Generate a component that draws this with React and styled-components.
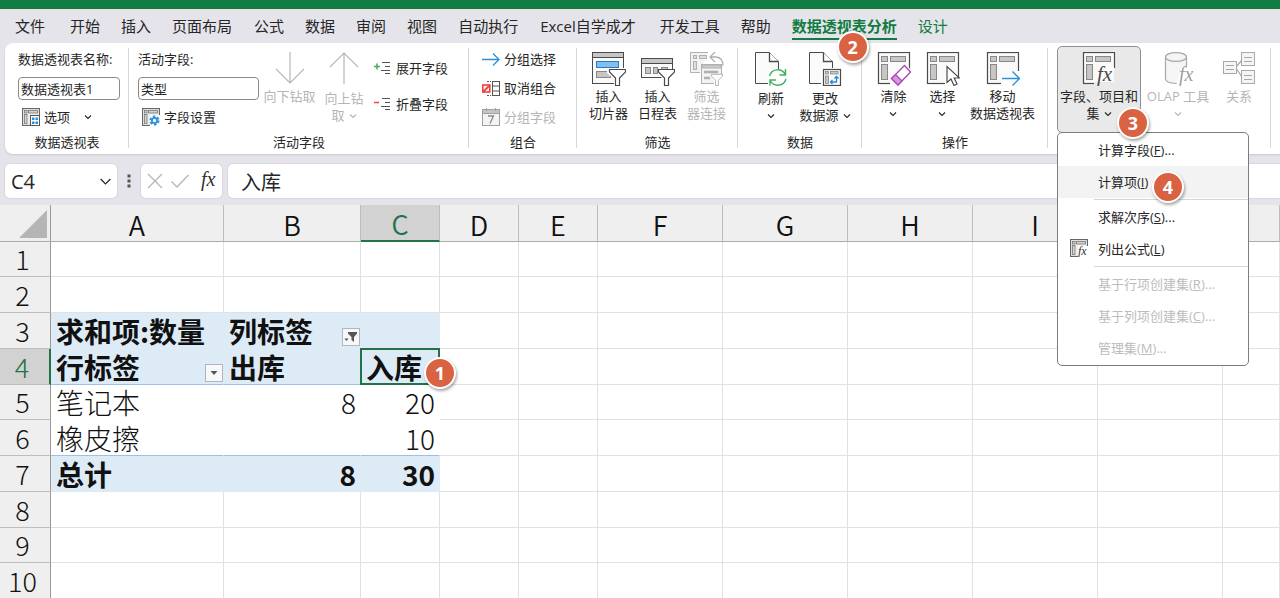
import React from "react";
import styled, { createGlobalStyle, css } from "styled-components";

const GREEN = "#107c41";

const GlobalStyle = createGlobalStyle`
  *, *::before, *::after { box-sizing: border-box; }
  body {
    margin: 0;
    background: #e5e4ea;
    color: #262626;
    font-family: "Open Sans", "Noto Sans CJK SC", sans-serif;
    font-size: 13px;
    overflow-x: hidden;
  }
  button, input {
    font: inherit;
    color: inherit;
    margin: 0;
    padding: 0;
    border: 0;
    background: none;
  }
  svg { display: block; flex: none; }
`;

/* ---------- window frame and tabs ---------- */

const TitleBar = styled.header`
  height: 9px;
  background: ${GREEN};
`;

const TabBar = styled.nav`
  display: flex;
  gap: 1px;
  height: 34px;
  padding-left: 5px;
  font-size: 15px;
`;

const Tab = styled.button`
  position: relative;
  flex: none;
  height: 34px;
  padding: 0 ${(p) => p.$padRight || 10}px 0 10px;
  line-height: 34px;
  white-space: nowrap;
  color: ${(p) => (p.$green ? GREEN : "#262626")};
  font-weight: ${(p) => (p.$active ? 700 : 400)};
  &:first-child { margin-right: 4px; }
  ${(p) =>
    p.$active &&
    css`
      &::after {
        content: "";
        position: absolute;
        left: 10px;
        right: 10px;
        bottom: 3px;
        height: 2px;
        background: ${GREEN};
      }
    `}
`;

const Badge = styled.span`
  position: absolute;
  z-index: 5;
  left: ${(p) => p.$left}px;
  top: ${(p) => p.$top}px;
  width: 32px;
  height: 32px;
  border: 2px solid #fff;
  border-radius: 50%;
  background: #d96243;
  box-shadow: 1px 2px 3px rgba(0, 0, 0, 0.35);
  color: #fff;
  font: 700 18px/28px "Open Sans", sans-serif;
  text-align: center;
`;

/* ---------- ribbon ---------- */

const Ribbon = styled.section`
  display: flex;
  margin-left: 5px;
  background: #fff;
  border-radius: 8px 0 0 8px;
  box-shadow: 0 1px 2px rgba(0, 0, 0, 0.12);
`;

const Group = styled.div`
  position: relative;
  display: flex;
  flex-direction: column;
  flex: none;
  width: ${(p) => p.$width}px;
  height: 111px;
  &::after {
    content: "";
    position: absolute;
    right: 0;
    top: 5px;
    bottom: 6px;
    width: 1px;
    background: #d6d6d6;
  }
`;

const GroupBody = styled.div`
  display: flex;
  justify-content: ${(p) => p.$justify || "center"};
  height: 88px;
  padding: ${(p) => p.$pad || "0"};
`;

const GroupLabel = styled.div`
  line-height: 22px;
  text-align: center;
`;

const FieldColumn = styled.div`
  display: flex;
  flex-direction: column;
  align-items: flex-start;
  gap: 8px;
  width: ${(p) => p.$width}px;
  padding-top: 7px;
`;

const FieldLabel = styled.label`
  line-height: 19px;
  white-space: nowrap;
`;

const TextBox = styled.input`
  width: 100%;
  height: 23px;
  padding: 0 2px;
  border: 1px solid #8a8a8a;
  border-radius: 4px;
  background: #fff;
`;

const SmallColumn = styled.div`
  display: flex;
  flex-direction: column;
  gap: ${(p) => p.$gap}px;
  padding: ${(p) => p.$pad};
`;

const SmallButton = styled.button`
  display: flex;
  align-items: center;
  gap: 4px;
  height: 18px;
  padding-left: ${(p) => (p.$indent ? 4 : 0)}px;
  line-height: 18px;
  white-space: nowrap;
  color: ${(p) => (p.disabled ? "#b5b5b5" : "#262626")};
`;

const Trailing = styled.span`
  margin-left: 10px;
`;

const LargeButton = styled.button`
  display: flex;
  flex-direction: column;
  align-items: center;
  flex: none;
  width: ${(p) => p.$width}px;
  padding-top: 9px;
  line-height: 17px;
  white-space: nowrap;
  color: ${(p) => (p.disabled ? "#b5b5b5" : "#262626")};
`;

const LargeLabel = styled.span`
  display: flex;
  flex-direction: column;
  align-items: center;
  margin-top: ${(p) => (p.$low ? 4 : 2)}px;
`;

const Line = styled.span`
  display: flex;
  align-items: center;
  justify-content: center;
  gap: 4px;
  height: 17px;
`;

const MenuAnchor = styled.div`
  position: relative;
  width: 84px;
  padding-top: 3px;
`;

const OpenButton = styled(LargeButton)`
  width: 100%;
  height: 87px;
  padding-top: 5px;
  border: 1px solid #8f8f8f;
  border-radius: 5px;
  background: #e9e9e9;
`;

const Menu = styled.div`
  position: absolute;
  z-index: 4;
  left: 0;
  top: 89px;
  width: 192px;
  padding: 1px 0;
  border: 1px solid #7d7d7d;
  border-radius: 5px;
  background: #fff;
`;

const MenuItem = styled.button`
  position: relative;
  display: grid;
  grid-template-columns: 40px 1fr;
  align-items: center;
  width: 100%;
  height: 32px;
  padding-bottom: 2px;
  text-align: left;
  white-space: nowrap;
  color: ${(p) => (p.disabled ? "#bcbcbc" : "#262626")};
  background: ${(p) => (p.$hover ? "#f3f3f3" : "transparent")};
`;

const MenuIcon = styled.span`
  padding-left: 12px;
`;

const MenuRule = styled.div`
  height: 3px;
  padding: 1px 0 1px 36px;
  &::before {
    content: "";
    display: block;
    height: 1px;
    background: #d6d6d6;
  }
`;

/* ---------- formula bar ---------- */

const FormulaBar = styled.section`
  display: flex;
  align-items: center;
  height: 51px;
  padding: 3px 0 0 5px;
  font-size: 20px;
`;

const BarBox = styled.div`
  display: flex;
  align-items: center;
  justify-content: space-between;
  height: 34px;
  border-radius: 5px;
  background: #fff;
  box-shadow: 0 0 1px 1px rgba(0, 0, 0, 0.06);
`;

const NameBox = styled(BarBox)`
  width: 112px;
  padding: 0 5px 0 6px;
  input { width: 70px; }
`;

const EditBox = styled(BarBox)`
  width: 81px;
  margin-right: 6px;
  padding: 0 2px 0 6px;
`;

const FormulaBox = styled(BarBox)`
  flex: 1;
  border-radius: 5px 0 0 5px;
  input { width: 100%; padding-left: 13px; }
`;

const Dots = styled.span`
  display: flex;
  justify-content: center;
  width: 24px;
`;

/* ---------- worksheet ---------- */

const Sheet = styled.table`
  width: 100%;
  table-layout: fixed;
  border-collapse: separate;
  border-spacing: 0;
  background: #fff;
  color: #111;
  font-family: "Noto Sans CJK SC", sans-serif;
  font-size: 28px;
  line-height: 34px;
`;

const Col = styled.col`
  width: ${(p) => (p.$width ? p.$width + "px" : "auto")};
`;

const ColHead = styled.th`
  height: 37px;
  padding: 4px 0 0;
  font-size: 27px;
  line-height: 32px;
  font-weight: 350;
  border-right: 1px solid #bdbdbd;
  border-bottom: 1px solid #ababab;
  background: #efefef;
  ${(p) =>
    p.$selected &&
    css`
      padding-top: 3px;
      background: #d2d2d2;
      color: #217346;
      border-bottom: 2px solid #217346;
    `}
`;

const Corner = styled(ColHead)`
  padding: 1px 3px 0 0;
  border-right-color: #999;
  svg { margin-left: auto; }
`;

const Row = styled.tr`
  height: 36px;
  &:nth-child(4n + 1) { height: 35px; }
`;

const RowHead = styled.th`
  padding: 0 5px 0 0;
  font-size: 27px;
  font-weight: 300;
  border-right: 1px solid #999;
  border-bottom: 1px solid #bdbdbd;
  background: #efefef;
  ${(p) =>
    p.$selected &&
    css`
      background: #d2d2d2;
      color: #217346;
      border-right: 2px solid #217346;
    `}
`;

const Cell = styled.td`
  position: relative;
  padding: 0;
  border-right: 1px solid ${(p) => (p.$fill ? p.$fill : "#e1e1e1")};
  border-bottom: 1px solid ${(p) => p.$rule || p.$fill || "#e1e1e1"};
  background: ${(p) => p.$fill || "#fff"};
  font-weight: ${(p) => (p.$bold ? 700 : 300)};
  ${(p) =>
    p.$selected &&
    css`
      &::after {
        content: "";
        position: absolute;
        inset: -1px;
        border: 2px solid #217346;
      }
    `}
`;

const CellContent = styled.div`
  display: flex;
  align-items: center;
  justify-content: ${(p) => (p.$right ? "flex-end" : "space-between")};
  height: 34px;
  padding: 0 ${(p) => (p.$right ? 4 : 0)}px 0 5px;
  line-height: 32px;
  white-space: nowrap;
`;

const FilterButton = styled.button`
  display: flex;
  align-items: center;
  justify-content: center;
  align-self: flex-end;
  width: 18px;
  height: 18px;
  margin-bottom: 2px;
  border: 1px solid #b4b4bc;
  background: #f7f8fa;
`;

/* ---------- icons ---------- */

const INK = "#4a4a4a";

const Chevron = ({ size = 8, color = "currentColor" }) => (
  <svg width={size} height={size} viewBox="0 0 8 8" fill="none" stroke={color} strokeWidth={size > 9 ? 0.8 : 1.1}>
    <path d="M1 2.5 4 5.5 7 2.5" />
  </svg>
);

const Svg = ({ size = 34, box = 34, children }) => (
  <svg width={size} height={size} viewBox={`0 0 ${box} ${box}`} fill="none" aria-hidden="true">
    {children}
  </svg>
);

const PivotGrid = ({ ink = INK, fill = "#c8c6c4" }) => (
  <g stroke={ink}>
    <rect x="1.5" y="0.5" width="31" height="31" fill="#fafafa" strokeWidth="1.2" />
    <g fill={fill} stroke="#8a8886">
      <rect x="4.5" y="4.5" width="6" height="5" />
      <rect x="13.5" y="4.5" width="15" height="5" />
      <rect x="4.5" y="12.5" width="6" height="15" />
    </g>
  </g>
);

const Funnel = ({ x, y, ink = INK, scale = 1 }) => (
  <path
    transform={`translate(${x} ${y}) scale(${scale})`}
    d="M0.5 0.5H16.5V3L10.5 9V16.5H6.5V9L0.5 3Z"
    fill="#fff"
    stroke={ink}
    strokeWidth="1.2"
  />
);

const SlicerIcon = () => (
  <Svg>
    <rect x="0.5" y="0.5" width="31" height="31" fill="#fafafa" stroke={INK} />
    <path d="M1 1H31V5H1Z" fill="#c8c6c4" />
    <path d="M0.5 5.5H31.5" stroke={INK} />
    <rect x="4.5" y="9.5" width="22" height="6" fill="#83beec" stroke="#1e7fd0" />
    <rect x="4.5" y="19.5" width="14" height="6" fill="#c8c6c4" stroke="#8a8886" />
    <path d="M15 16H34V34H22V27L15 21Z" fill="#fff" />
    <Funnel x={17} y={17} />
  </Svg>
);

const TimelineIcon = () => (
  <Svg>
    <rect x="0.5" y="6.5" width="31" height="19" fill="#fafafa" stroke={INK} />
    <path d="M1 7H31V11H1Z" fill="#c8c6c4" />
    <path d="M0.5 11.5H31.5" stroke={INK} />
    <g fill="#c8c6c4" stroke="#8a8886">
      <rect x="4.5" y="15.5" width="5" height="6" />
      <rect x="12.5" y="15.5" width="4" height="6" />
      <rect x="20.5" y="15.5" width="6" height="6" />
    </g>
    <path d="M19 18H34V34H22V27L17 22Z" fill="#fff" />
    <Funnel x={17} y={17} />
  </Svg>
);

const FilterLinkIcon = () => (
  <Svg>
    <g stroke="#b0b0b0">
      <path d="M18 0.5H0.5V20.5H10" fill="#f3f3f3" />
      <rect x="3.5" y="3.5" width="3" height="3" fill="#ddd" />
      <rect x="9.5" y="3.5" width="7" height="3" fill="#ddd" />
      <rect x="3.5" y="9.5" width="3" height="8" fill="#ddd" />
      <path d="M25 0 20 5 25 10M20 5H26Q33 5.5 33 14" strokeWidth="1.3" />
      <rect x="11.5" y="12.5" width="20" height="19" fill="#f3f3f3" />
      <path d="M12 13H31V16H12Z" fill="#ccc" />
      <path d="M14 20H28M14 26H20" strokeWidth="2.4" />
    </g>
    <path d="M20 22H34V34H24V29Z" fill="#fff" />
    <Funnel x={21} y={22} ink="#a8a8a8" scale={0.7} />
  </Svg>
);

const Page = () => (
  <>
    <path d="M1.5 0.5H15.5L24.5 9.5V31.5H1.5Z" fill="#fafafa" stroke={INK} />
    <path d="M15.5 0.5V9.5H24.5" fill="#fff" stroke={INK} strokeWidth="1.3" />
  </>
);

const RefreshIcon = () => (
  <Svg>
    <Page />
    <path d="M14 17H34V34H14Z" fill="#fff" />
    <g stroke="#3fae5a" strokeWidth="1.4">
      <path d="M15.5 24A8.5 8.5 0 0 1 31 22M31.5 17V23H25.5" />
      <path d="M32 27A8.5 8.5 0 0 1 16.5 29M16 33.5V28H22" />
    </g>
  </Svg>
);

const ChangeSourceIcon = () => (
  <Svg>
    <Page />
    <rect x="13" y="16" width="21" height="18" fill="#fff" />
    <rect x="15.5" y="17.5" width="17" height="16" fill="#fafafa" stroke={INK} strokeWidth="1.2" />
    <g fill="#c8c6c4" stroke="#8a8886" strokeWidth="0.8">
      <rect x="17.5" y="19.5" width="3" height="2.5" />
      <rect x="22.5" y="19.5" width="7.5" height="2.5" />
      <rect x="17.5" y="24" width="3" height="7.5" />
    </g>
    <path
      d="M22.5 30H28.5V24.5M24.5 28 22.5 30 24.5 32M26.5 26.5 28.5 24.5 30.5 26.5"
      stroke="#1e8ad6"
      strokeWidth="1.3"
    />
  </Svg>
);

const ClearIcon = () => (
  <Svg>
    <PivotGrid />
    <path d="M13 27 28 11 34 18V34H13Z" fill="#fff" />
    <path d="M27.5 13.5 33.5 20 21 33 14.5 26.5Z" fill="#fff" stroke="#a846b5" strokeWidth="1.3" />
    <path d="M18.5 22.5 25 29 21 33 14.5 26.5Z" fill="#d995df" stroke="#a846b5" strokeWidth="1.2" />
  </Svg>
);

const SelectIcon = () => (
  <Svg>
    <PivotGrid />
    <path d="M19 12 34 27V34H19Z" fill="#fff" />
    <path d="M21 14.5V30.5L25 27L28 33.5L31 32L28.2 26H33.5Z" fill="#fff" stroke={INK} strokeWidth="1.2" />
  </Svg>
);

const MoveIcon = () => (
  <Svg>
    <PivotGrid />
    <path d="M15 24H28V19H34V34H15Z" fill="#fff" />
    <path d="M16 26.5H33.5M26.5 19.5 33.5 26.5 26.5 33.5" stroke="#2b91d8" strokeWidth="1.4" />
  </Svg>
);

const FxGlyph = ({ x, y, size, color = INK }) => (
  <text x={x} y={y} fontFamily="Liberation Serif, serif" fontStyle="italic" fontSize={size} fill={color}>
    fx
  </text>
);

const FieldsIcon = () => (
  <Svg>
    <PivotGrid />
    <path d="M17 14H32V31H13V27Z" fill="#fafafa" />
    <path d="M12 30H34V34H12ZM32 16H34V34H32Z" fill="#e9e9e9" />
    <FxGlyph x={15} y={29} size={21} />
  </Svg>
);

const OlapIcon = () => (
  <Svg>
    <g stroke="#a8a8a8" fill="#f5f5f5" strokeWidth="1.2">
      <path d="M4.5 5V27Q5 31 15 31.5Q25 31 25.5 27V5" />
      <ellipse cx="15" cy="5" rx="10.5" ry="4.4" />
    </g>
    <path d="M21 14H34V34H15Z" fill="#fff" />
    <FxGlyph x={18} y={29} size={20} color="#a0a0a0" />
  </Svg>
);

const RelationIcon = () => (
  <Svg>
    <g stroke="#a8a8a8" fill="#f5f5f5">
      <path d="M14 15 20 8M14 16 20 25" strokeWidth="1.3" />
      <rect x="1.5" y="9.5" width="13" height="12" />
      <rect x="19.5" y="0.5" width="13" height="13" />
      <rect x="19.5" y="18.5" width="13" height="13" />
      <path d="M4 13.5H12M4 17.5H12M22 5.5H30M22 9.5H30M22 23.5H30M22 27.5H30" />
    </g>
  </Svg>
);

const ArrowIcon = ({ up }) => (
  <Svg>
    <path d={up ? "M17 32V1M3 15 17 1 31 15" : "M17 0V31M3 17 17 31 31 17"} stroke="#b8b8b8" strokeWidth="1.2" />
  </Svg>
);

const SmallPivot = ({ children }) => (
  <Svg size={18} box={18}>
    <rect x="0.5" y="0.5" width="17" height="17" fill="#eee" stroke="#666" strokeWidth="1.2" />
    <g fill="#d6d4d2" stroke="#777" strokeWidth="0.8">
      <rect x="2.5" y="2.5" width="2.5" height="2.5" />
      <rect x="6.5" y="2.5" width="9" height="2.5" />
      <rect x="2.5" y="6.5" width="2.5" height="9" />
    </g>
    <rect x="8" y="7" width="10" height="11" fill="#fff" />
    {children}
  </Svg>
);

const OptionsIcon = () => (
  <SmallPivot>
    <rect x="8.5" y="7.5" width="9" height="10" fill="#fff" stroke="#555" />
    <path
      d="M10 9.5H12.5V12H10ZM13.5 9.5H16V12H13.5ZM10 13.5H12.5V16H10ZM13.5 13.5H16V16H13.5Z"
      fill="#2b91d8"
    />
  </SmallPivot>
);

const SettingsIcon = () => (
  <SmallPivot>
    <circle cx="12.5" cy="12.5" r="4.2" stroke="#2b91d8" strokeWidth="1.8" strokeDasharray="2.6 1.8" />
    <circle cx="12.5" cy="12.5" r="2.6" fill="#fff" stroke="#2b91d8" strokeWidth="1.8" />
  </SmallPivot>
);

const ListFormulaIcon = () => (
  <SmallPivot>
    <FxGlyph x={8} y={16} size={12} color="#333" />
  </SmallPivot>
);

const ExpandIcon = ({ minus }) => (
  <Svg size={18} box={18}>
    <path d={minus ? "M0 7.5H5" : "M0 7.5H6M3 4.5V10.5"} stroke={minus ? "#f0423c" : "#3fae5a"} strokeWidth="1.5" />
    <path d="M8 3.5H16M11 7.5H16M7 11.5H16M11 14.5H16" stroke="#555" strokeWidth="1.2" />
  </Svg>
);

const GroupIcon = () => (
  <Svg size={18} box={18}>
    <path d="M0 9.5H17M11 3.5 17 9.5 11 15.5" stroke="#2b91d8" strokeWidth="1.3" />
  </Svg>
);

const UngroupIcon = () => (
  <Svg size={18} box={18}>
    <path d="M5 2.5H9M5 16.5H9" stroke="#555" strokeDasharray="2 1" />
    <rect x="10.5" y="2.5" width="7" height="14" fill="#fff" stroke="#555" />
    <path d="M10.5 7H17.5M10.5 12H17.5" stroke="#555" />
    <rect x="0.8" y="6" width="7" height="7" fill="#fff" stroke="#f0423c" strokeWidth="1.6" />
    <path d="M1 13 8 6" stroke="#f0423c" strokeWidth="1.8" />
  </Svg>
);

const CalendarIcon = () => (
  <Svg size={18} box={18}>
    <rect x="0.5" y="1.5" width="17" height="16" fill="#f3f3f3" stroke="#a0a0a0" />
    <path d="M1 2H17V5H1Z" fill="#c4c4c4" />
    <path d="M4.5 0V3M13.5 0V3M1 5.5H17" stroke="#a0a0a0" />
    <path d="M6 8H11.5L8 15.5" stroke="#8a8a8a" strokeWidth="1.3" />
  </Svg>
);

/* ---------- data ---------- */

const TABS_BEFORE = [
  ["文件"], ["开始"], ["插入"], ["页面布局", 11], ["公式"], ["数据"], ["审阅"],
  ["视图"], ["自动执行", 11], ["Excel自学成才", 13], ["开发工具"], ["帮助"],
];

const COLUMNS = [
  ["A", 173], ["B", 137], ["C", 79], ["D", 79], ["E", 79], ["F", 125],
  ["G", 125], ["H", 125], ["I", 125], ["J", 125], ["", 0],
];

const BLUE = "#ddebf7";
const RULE = "#9bc2e6";

const PIVOT_ROWS = {
  3: { fill: BLUE, bold: true, cells: [{ text: "求和项:数量" }, { text: "列标签", filter: "funnel" }, {}] },
  4: { fill: BLUE, bold: true, rule: RULE, cells: [{ text: "行标签", filter: "arrow" }, { text: "出库" }, { text: "入库", selected: true }] },
  5: { fill: "#ffffff", cells: [{ text: "笔记本" }, { text: "8", right: true }, { text: "20", right: true }] },
  6: { fill: "#ffffff", rule: RULE, cells: [{ text: "橡皮擦" }, {}, { text: "10", right: true }] },
  7: { fill: BLUE, bold: true, cells: [{ text: "总计" }, { text: "8", right: true }, { text: "30", right: true }] },
};

const Large = ({ icon, lines, width, low, chevron, disabled }) => (
  <LargeButton $width={width} disabled={disabled}>
    {icon}
    <LargeLabel $low={low}>
      {lines.map((line, i) => (
        <Line key={line || i}>
          {line}
          {chevron && i === lines.length - 1 && <Chevron />}
        </Line>
      ))}
    </LargeLabel>
  </LargeButton>
);

const Item = ({ text, hotkey, more, icon, children, ...rest }) => (
  <MenuItem role="menuitem" {...rest}>
    <MenuIcon>{icon}</MenuIcon>
    <span>
      {text}(<u>{hotkey}</u>){more && "..."}
    </span>
    {children}
  </MenuItem>
);

const FilterGlyph = ({ kind }) =>
  kind === "funnel" ? (
    <svg width="14" height="14" viewBox="0 0 14 14" fill="#555">
      <path d="M4 2H13V3.5L10 7V12L7.5 10V7L4 3.5Z" />
      <path d="M0.5 8.5H4.5L2.5 11Z" />
    </svg>
  ) : (
    <svg width="8" height="4" viewBox="0 0 8 4" fill="#555">
      <path d="M0.5 0H7.5L4 4Z" />
    </svg>
  );

export default function App() {
  return (
    <>
      <GlobalStyle />
      <TitleBar />
      <TabBar>
        {TABS_BEFORE.map(([name, padRight]) => (
          <Tab key={name} $padRight={padRight}>{name}</Tab>
        ))}
        <Tab $green $active>
          数据透视表分析
          <Badge $left={55} $top={22}>2</Badge>
        </Tab>
        <Tab $green>设计</Tab>
      </TabBar>

      <Ribbon>
        <Group $width={124}>
          <GroupBody $justify="flex-start" $pad="0 0 0 13px">
            <FieldColumn $width={102}>
              <FieldLabel htmlFor="pivot-name">数据透视表名称:</FieldLabel>
              <TextBox id="pivot-name" defaultValue="数据透视表1" />
              <SmallButton $indent>
                <OptionsIcon />
                选项
                <Trailing>
                  <Chevron />
                </Trailing>
              </SmallButton>
            </FieldColumn>
          </GroupBody>
          <GroupLabel>数据透视表</GroupLabel>
        </Group>

        <Group $width={340}>
          <GroupBody $justify="flex-start" $pad="0 0 0 9px">
            <FieldColumn $width={121}>
              <FieldLabel htmlFor="active-field">活动字段:</FieldLabel>
              <TextBox id="active-field" defaultValue="类型" />
              <SmallButton $indent>
                <SettingsIcon />
                字段设置
              </SmallButton>
            </FieldColumn>
            <Large icon={<ArrowIcon />} lines={["向下钻取"]} width={61} disabled />
            <Large icon={<ArrowIcon up />} lines={["向上钻", "取"]} width={48} low chevron disabled />
            <SmallColumn $gap={18} $pad="16px 0 0 6px">
              <SmallButton>
                <ExpandIcon />
                展开字段
              </SmallButton>
              <SmallButton>
                <ExpandIcon minus />
                折叠字段
              </SmallButton>
            </SmallColumn>
          </GroupBody>
          <GroupLabel>活动字段</GroupLabel>
        </Group>

        <Group $width={108}>
          <GroupBody $justify="flex-start" $pad="0 0 0 13px">
            <SmallColumn $gap={11} $pad="7px 0 0">
              <SmallButton>
                <GroupIcon />
                分组选择
              </SmallButton>
              <SmallButton>
                <UngroupIcon />
                取消组合
              </SmallButton>
              <SmallButton disabled>
                <CalendarIcon />
                分组字段
              </SmallButton>
            </SmallColumn>
          </GroupBody>
          <GroupLabel>组合</GroupLabel>
        </Group>

        <Group $width={161}>
          <GroupBody>
            <Large icon={<SlicerIcon />} lines={["插入", "切片器"]} width={49} />
            <Large icon={<TimelineIcon />} lines={["插入", "日程表"]} width={49} />
            <Large icon={<FilterLinkIcon />} lines={["筛选", "器连接"]} width={49} disabled />
          </GroupBody>
          <GroupLabel>筛选</GroupLabel>
        </Group>

        <Group $width={124}>
          <GroupBody>
            <Large icon={<RefreshIcon />} lines={["刷新", ""]} width={50} low chevron />
            <Large icon={<ChangeSourceIcon />} lines={["更改", "数据源"]} width={58} low chevron />
          </GroupBody>
          <GroupLabel>数据</GroupLabel>
        </Group>

        <Group $width={186}>
          <GroupBody $pad="0 3px 0 0">
            <Large icon={<ClearIcon />} lines={["清除", ""]} width={49} chevron />
            <Large icon={<SelectIcon />} lines={["选择", ""]} width={49} chevron />
            <Large icon={<MoveIcon />} lines={["移动", "数据透视表"]} width={71} />
          </GroupBody>
          <GroupLabel>操作</GroupLabel>
        </Group>

        <Group $width={223}>
          <GroupBody $justify="flex-start" $pad="0 0 0 9px">
            <MenuAnchor>
              <OpenButton aria-haspopup="menu" aria-expanded="true">
                <FieldsIcon />
                <LargeLabel>
                  <Line>字段、项目和</Line>
                  <Line>
                    集
                    <Chevron />
                  </Line>
                </LargeLabel>
              </OpenButton>
              <Badge $left={60} $top={64}>3</Badge>
              <Menu role="menu">
                <Item text="计算字段" hotkey="F" more />
                <Item text="计算项" hotkey="I" $hover>
                  <Badge $left={94} $top={5}>4</Badge>
                </Item>
                <MenuRule />
                <Item text="求解次序" hotkey="S" more />
                <Item text="列出公式" hotkey="L" icon={<ListFormulaIcon />} />
                <MenuRule />
                <Item text="基于行项创建集" hotkey="R" more disabled />
                <Item text="基于列项创建集" hotkey="C" more disabled />
                <Item text="管理集" hotkey="M" more disabled />
              </Menu>
            </MenuAnchor>
            <Large icon={<OlapIcon />} lines={["OLAP 工具", ""]} width={74} chevron disabled />
            <Large icon={<RelationIcon />} lines={["关系"]} width={48} disabled />
          </GroupBody>
        </Group>
      </Ribbon>

      <FormulaBar>
        <NameBox>
          <input aria-label="名称框" defaultValue="C4" />
          <Chevron size={13} />
        </NameBox>
        <Dots>
          <svg width="4" height="14" viewBox="0 0 4 14" fill="#555">
            <path d="M0.5 0.5H3.5V3.5H0.5ZM0.5 5.5H3.5V8.5H0.5ZM0.5 10.5H3.5V13.5H0.5Z" />
          </svg>
        </Dots>
        <EditBox>
          <button aria-label="取消">
            <svg width="16" height="16" viewBox="0 0 16 16" fill="none" stroke="#b5b5b5" strokeWidth="1.3">
              <path d="M1 1 15 15M15 1 1 15" />
            </svg>
          </button>
          <button aria-label="输入">
            <svg width="18" height="16" viewBox="0 0 18 16" fill="none" stroke="#b5b5b5" strokeWidth="1.3">
              <path d="M0.5 8.5 6 14 17.5 2" />
            </svg>
          </button>
          <button aria-label="插入函数">
            <svg width="24" height="26" viewBox="0 0 24 26">
              <FxGlyph x={5} y={18} size={20} color="#333" />
            </svg>
          </button>
        </EditBox>
        <FormulaBox>
          <input aria-label="编辑栏" defaultValue="入库" />
        </FormulaBox>
      </FormulaBar>

      <Sheet>
        <colgroup>
          <Col $width={51} />
          {COLUMNS.map(([name, width]) => (
            <Col key={name} $width={width} />
          ))}
        </colgroup>
        <thead>
          <tr>
            <Corner>
              <svg width="28" height="28" viewBox="0 0 28 28" fill="#b5b5b5">
                <path d="M28 0V28H0Z" />
              </svg>
            </Corner>
            {COLUMNS.map(([name]) => (
              <ColHead key={name} $selected={name === "C"}>
                {name}
              </ColHead>
            ))}
          </tr>
        </thead>
        <tbody>
          {Array.from({ length: 10 }, (_, i) => i + 1).map((n) => {
            const row = PIVOT_ROWS[n];
            return (
              <Row key={n}>
                <RowHead $selected={n === 4}>{n}</RowHead>
                {COLUMNS.map(([name], c) => {
                  const cell = row && row.cells[c];
                  if (!cell) return <Cell key={name} />;
                  return (
                    <Cell key={name} $fill={row.fill} $rule={row.rule} $bold={row.bold} $selected={cell.selected}>
                      <CellContent $right={cell.right}>
                        {cell.text}
                        {cell.filter && (
                          <FilterButton aria-label="筛选">
                            <FilterGlyph kind={cell.filter} />
                          </FilterButton>
                        )}
                      </CellContent>
                      {cell.selected && <Badge $left={63} $top={8}>1</Badge>}
                    </Cell>
                  );
                })}
              </Row>
            );
          })}
        </tbody>
      </Sheet>
    </>
  );
}
